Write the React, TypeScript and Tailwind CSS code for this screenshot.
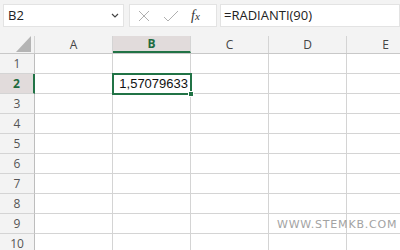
const cols = ["A", "B", "C", "D", "E"]
const rows = [1, 2, 3, 4, 5, 6, 7, 8, 9, 10]

export default function App() {
  return (
    <div
      className="relative w-[400px] h-[250px] overflow-hidden bg-white text-[#333]"
      style={{ fontFamily: '"Open Sans", "Liberation Sans", sans-serif' }}
    >
      {/* formula bar */}
      <div className="h-[36px] bg-[#f3f3f3] flex items-start pt-[4px] pl-[3px] gap-[5px]">
        <div className="w-[121px] h-[23px] bg-white border border-[#e3e3e3] flex items-center justify-between pl-[4px] pr-[3px]">
          <span className="text-[13px] text-[#222]">B2</span>
          <svg width="8" height="5" viewBox="0 0 8 5" className="mr-[1px]">
            <path d="M1 1 L4 4 L7 1" fill="none" stroke="#444" strokeWidth="1.2" />
          </svg>
        </div>
        <div className="w-[88px] h-[23px] bg-white border border-[#e3e3e3] flex items-center">
          <svg width="12" height="12" viewBox="0 0 12 12" className="ml-[8px]">
            <path d="M1 1 L11 11 M11 1 L1 11" stroke="#b0b0b0" strokeWidth="1" />
          </svg>
          <svg width="16" height="12" viewBox="0 0 16 12" className="ml-[13px]">
            <path d="M1 7 L5 11 L15 1" fill="none" stroke="#b0b0b0" strokeWidth="1" />
          </svg>
          <span
            className="ml-[12px] text-[14px] italic text-[#333]"
            style={{ fontFamily: '"Liberation Serif", serif' }}
          >
            f<span className="text-[11px]">x</span>
          </span>
        </div>
        <div className="flex-1 -ml-[2px] h-[23px] bg-white border border-[#e3e3e3] flex items-center pl-[3px]">
          <span className="text-[13px] text-[#222]">=RADIANTI(90)</span>
        </div>
      </div>

      {/* header row */}
      <div className="flex h-[18px] bg-[#f3f3f3] border-b border-[#c8c8c8]">
        <div className="w-[35px] shrink-0 relative border-r border-[#d4d4d4]">
          <svg width="16" height="16" viewBox="0 0 16 16" className="absolute right-[2px] bottom-[1px]">
            <path d="M15 0 L15 16 L0 16 Z" fill="#b4b4b4" />
          </svg>
        </div>
        {cols.map((c) => (
          <div
            key={c}
            className={
              c === "B"
                ? "w-[78px] shrink-0 flex items-center justify-center text-[12px] font-bold text-[#1d6b40] bg-[#e1dbdb] border-b-2 border-[#217346] border-r border-r-[#d4d4d4]"
                : "w-[78px] shrink-0 flex items-center justify-center text-[12px] text-[#444] border-r border-[#d4d4d4]"
            }
          >
            {c}
          </div>
        ))}
      </div>

      {/* rows */}
      {rows.map((r) => (
        <div key={r} className="flex h-[20px]">
          <div
            className={
              r === 2
                ? "w-[35px] shrink-0 flex items-center justify-center text-[12px] font-bold text-[#1d6b40] bg-[#e1dbdb] border-r-2 border-[#217346] border-b border-b-[#d4d4d4]"
                : "w-[35px] shrink-0 flex items-center justify-center text-[12px] text-[#555] bg-[#f3f3f3] border-r border-[#bdbdbd] border-b border-b-[#d4d4d4]"
            }
          >
            {r}
          </div>
          {cols.map((c) => (
            <div key={c} className="w-[78px] shrink-0 border-r border-b border-[#d4d4d4]" />
          ))}
        </div>
      ))}

      {/* active cell */}
      <div className="absolute left-[112px] top-[73px] w-[80px] h-[22px] border-2 border-[#217346] flex items-center justify-end pr-[2px]">
        <span className="text-[13px] text-[#111]" style={{ fontFamily: '"Liberation Sans", sans-serif' }}>
          1,57079633
        </span>
        <div className="absolute -right-[4px] -bottom-[4px] w-[6px] h-[6px] bg-[#217346] border border-white" />
      </div>

      {/* watermark */}
      <div
        className="absolute left-[277px] top-[217px] text-[11px] tracking-[0.8px] text-[#a3a3a3]"
        style={{ fontFamily: '"DejaVu Sans", sans-serif' }}
      >
        WWW.STEMKB.COM
      </div>
    </div>
  )
}
